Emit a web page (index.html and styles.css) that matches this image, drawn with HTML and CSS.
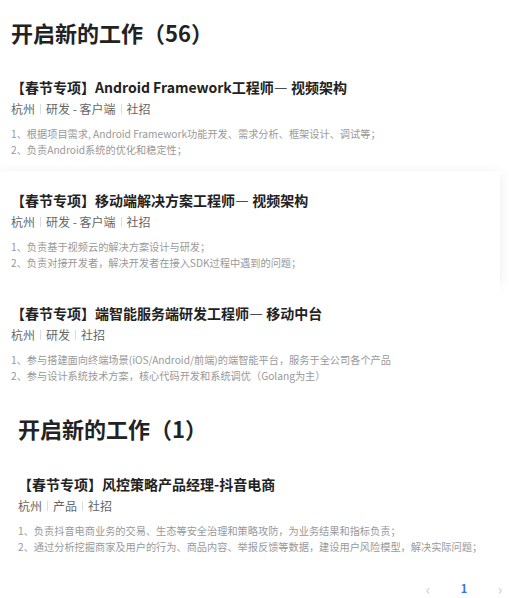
FILE: index.html
```html
<!DOCTYPE html>
<html lang="zh-CN">
<head>
<meta charset="utf-8">
<title>开启新的工作</title>
<link rel="stylesheet" href="styles.css">
</head>
<body>
<div class="page">
  <section class="group">
    <h1 class="group-title">开启新的工作（56）</h1>
    <div class="job">
      <div class="job-title">【春节专项】Android Framework工程师— 视频架构</div>
      <div class="job-meta"><span>杭州</span><i class="sep"></i><span>研发 - 客户端</span><i class="sep"></i><span>社招</span></div>
      <div class="job-desc">
        <p>1、根据项目需求, Android Framework功能开发、需求分析、框架设计、调试等；</p>
        <p>2、负责Android系统的优化和稳定性；</p>
      </div>
    </div>
    <div class="job job-active">
      <div class="job-title">【春节专项】移动端解决方案工程师— 视频架构</div>
      <div class="job-meta"><span>杭州</span><i class="sep"></i><span>研发 - 客户端</span><i class="sep"></i><span>社招</span></div>
      <div class="job-desc">
        <p>1、负责基于视频云的解决方案设计与研发；</p>
        <p>2、负责对接开发者，解决开发者在接入SDK过程中遇到的问题；</p>
      </div>
    </div>
    <div class="job">
      <div class="job-title">【春节专项】端智能服务端研发工程师— 移动中台</div>
      <div class="job-meta"><span>杭州</span><i class="sep"></i><span>研发</span><i class="sep"></i><span>社招</span></div>
      <div class="job-desc">
        <p>1、参与搭建面向终端场景(iOS/Android/前端)的端智能平台，服务于全公司各个产品</p>
        <p>2、参与设计系统技术方案，核心代码开发和系统调优（Golang为主）</p>
      </div>
    </div>
  </section>
  <section class="group group-second">
    <h1 class="group-title">开启新的工作（1）</h1>
    <div class="job">
      <div class="job-title">【春节专项】风控策略产品经理-抖音电商</div>
      <div class="job-meta"><span>杭州</span><i class="sep"></i><span>产品</span><i class="sep"></i><span>社招</span></div>
      <div class="job-desc">
        <p>1、负责抖音电商业务的交易、生态等安全治理和策略攻防，为业务结果和指标负责；</p>
        <p>2、通过分析挖掘商家及用户的行为、商品内容、举报反馈等数据，建设用户风险模型，解决实际问题；</p>
      </div>
    </div>
  </section>
  <nav class="pager">
    <span class="pager-item pager-arrow">‹</span>
    <span class="pager-item pager-current">1</span>
    <span class="pager-item pager-arrow">›</span>
  </nav>
</div>
</body>
</html>
```

FILE: styles.css
```css
* { box-sizing: border-box; }
html, body { margin: 0; padding: 0; background: #fff; }
body {
  font-family: "Noto Sans CJK SC", "Noto Sans", sans-serif;
  color: #222;
}
.page { width: 500px; padding-top: 18px; }
.group-title {
  margin: 0 0 12px;
  padding-left: 11px;
  font-size: 22px;
  line-height: 28px;
  font-weight: 700;
  color: #222;
}
.group-second { padding-left: 7px; padding-top: 17px; }
.group-second .group-title { margin-bottom: 13px; }
.job {
  padding: 18px 11px 13px;
  height: 113px;
  background: #fff;
}
.job-active {
  box-shadow: 0 2px 12px rgba(0, 0, 0, 0.08);
}
.job-title {
  font-size: 14px;
  line-height: 22px;
  font-weight: 700;
  color: #222;
  white-space: nowrap;
}
.job-meta {
  display: flex;
  align-items: center;
  font-size: 12px;
  line-height: 22px;
  color: #666;
}
.sep {
  display: inline-block;
  width: 1px;
  height: 10px;
  background: #ddd;
  margin: 0 5px;
}
.job-desc { margin-top: 6px; }
.job-desc p {
  margin: 0;
  font-size: 10.2px;
  line-height: 16px;
  color: #999;
  white-space: nowrap;
}
.pager {
  display: flex;
  justify-content: flex-end;
  align-items: center;
  padding-top: 9px;
  width: 518px;
}
.pager-item {
  width: 36px;
  height: 22px;
  display: flex;
  align-items: center;
  justify-content: center;
  font-size: 11px;
}
.pager-arrow { color: #ccc; font-size: 15px; }
.pager-current { color: #3370ff; font-weight: 700; }
```
